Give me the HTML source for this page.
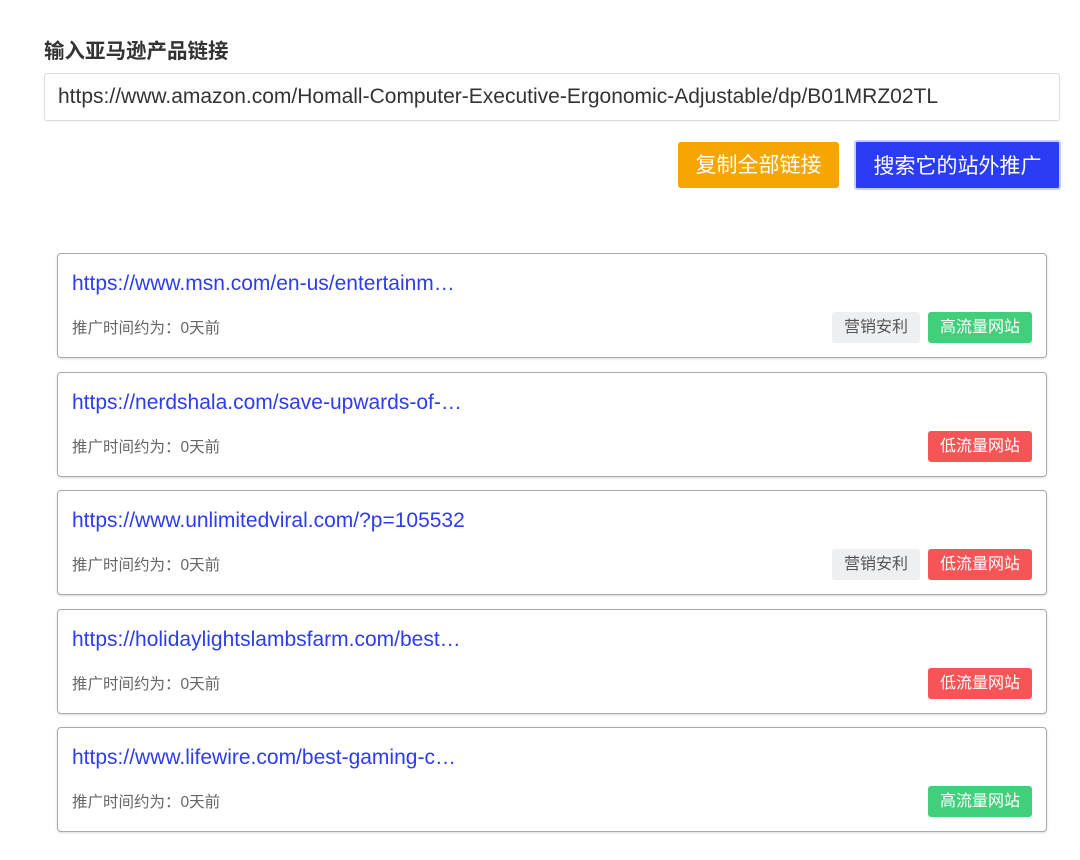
<!DOCTYPE html>
<html><head><meta charset="utf-8"><style>
*{box-sizing:border-box;margin:0;padding:0}
body{width:1080px;height:860px;background:#fff;font-family:"Liberation Sans","Noto Sans CJK SC",sans-serif;position:relative;overflow:hidden}
.title{position:absolute;left:44px;top:34px;font-size:20.5px;font-weight:bold;color:#333}
.inp{position:absolute;left:44px;top:73px;width:1016px;height:48px;border:1px solid #ddd;border-radius:3px;font-size:21px;color:#333;padding-left:13px;line-height:46px;box-shadow:0 1px 2px rgba(0,0,0,.05)}
.btn{position:absolute;color:#fff;font-size:21px;text-align:center;border-radius:3px}
.b1{left:678px;top:142px;width:161px;height:46px;line-height:48px;background:#f7a500}
.b2{left:854px;top:140px;width:207px;height:50px;line-height:49px;background:#2b3cf5;border:2px solid #c5ccf8}
.card{position:absolute;left:57px;width:990px;height:105px;border:1px solid #aaa;border-radius:4px;box-shadow:0 1px 2px rgba(0,0,0,.15)}
.link{position:absolute;left:14px;top:18px;font-size:21px;color:#2d3cf0}
.meta{position:absolute;left:14px;top:62px;font-size:15.5px;color:#666}
.tags{position:absolute;right:14px;top:58px;display:flex;gap:8px}
.tag{height:31px;line-height:31px;padding:0 12px;font-size:16px;border-radius:3px;color:#fff}
.g{background:#eeeff1;color:#555}.h{background:#42cf7b}.l{background:#f75458}
</style></head><body>
<div class="title">输入亚马逊产品链接</div>
<div class="inp">https://www.amazon.com/Homall-Computer-Executive-Ergonomic-Adjustable/dp/B01MRZ02TL</div>
<div class="btn b1">复制全部链接</div>
<div class="btn b2">搜索它的站外推广</div>
<div class="card" style="top:253px"><div class="link">https://www.msn.com/en-us/entertainm…</div><div class="meta">推广时间约为：0天前</div><div class="tags"><div class="tag g">营销安利</div><div class="tag h">高流量网站</div></div></div>
<div class="card" style="top:372px"><div class="link">https://nerdshala.com/save-upwards-of-…</div><div class="meta">推广时间约为：0天前</div><div class="tags"><div class="tag l">低流量网站</div></div></div>
<div class="card" style="top:490px"><div class="link">https://www.unlimitedviral.com/?p=105532</div><div class="meta">推广时间约为：0天前</div><div class="tags"><div class="tag g">营销安利</div><div class="tag l">低流量网站</div></div></div>
<div class="card" style="top:609px"><div class="link">https://holidaylightslambsfarm.com/best…</div><div class="meta">推广时间约为：0天前</div><div class="tags"><div class="tag l">低流量网站</div></div></div>
<div class="card" style="top:727px"><div class="link">https://www.lifewire.com/best-gaming-c…</div><div class="meta">推广时间约为：0天前</div><div class="tags"><div class="tag h">高流量网站</div></div></div>
</body></html>
